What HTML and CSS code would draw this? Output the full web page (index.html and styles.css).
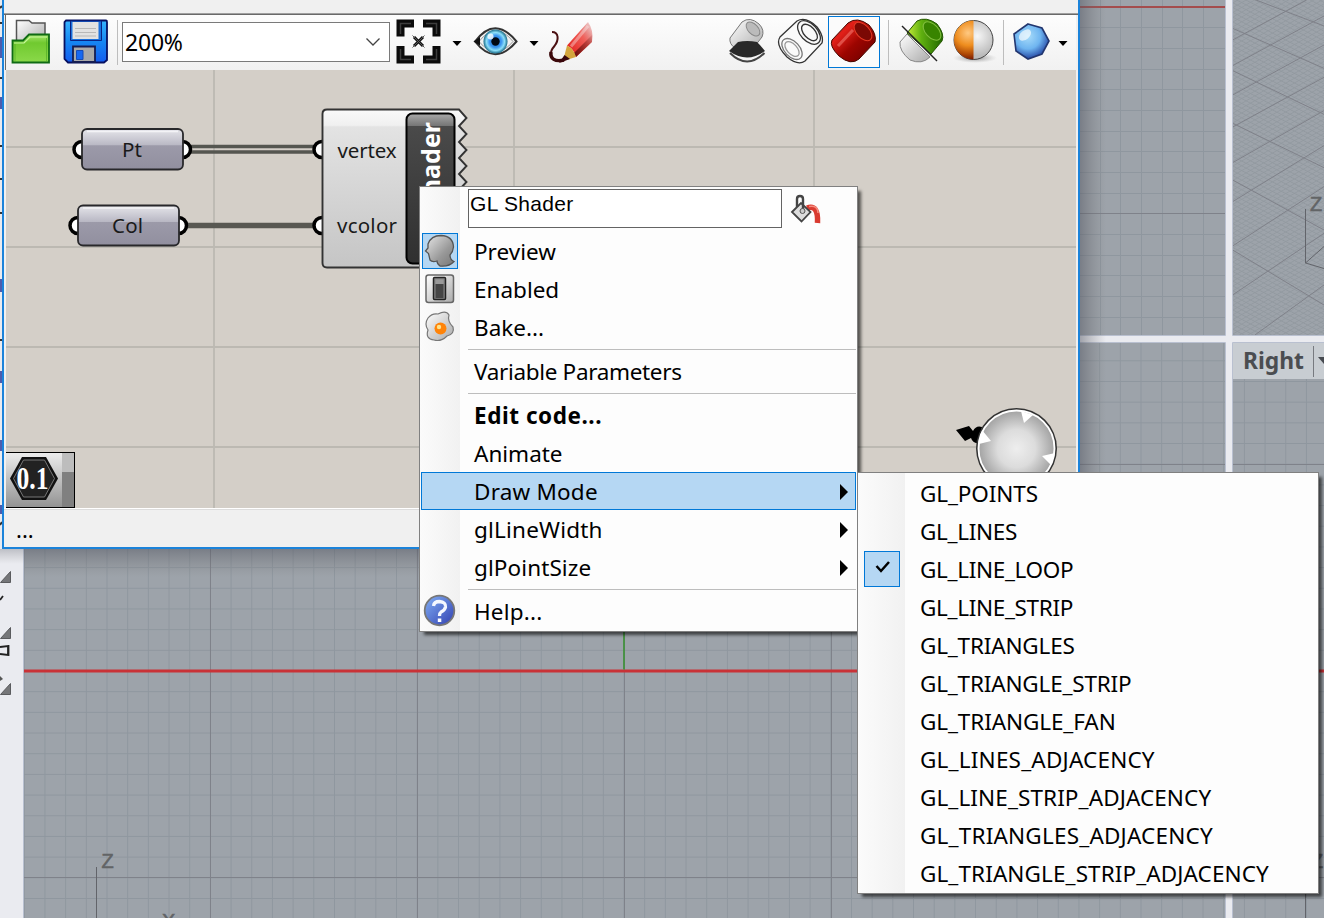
FILE: index.html
```
<!DOCTYPE html>
<html lang="en">
<head>
<meta charset="utf-8">
<title>Grasshopper</title>
<link rel="stylesheet" href="styles.css">
</head>
<body>
<main class="desktop">
<svg class="scene" width="1324" height="918" viewBox="0 0 1324 918">
  <defs>
    <pattern id="minor" x="624" y="671" width="20.68" height="20.68" patternUnits="userSpaceOnUse" patternTransform="translate(-0.5 -0.5)"><path d="M0 .5H20.68M.5 0V20.68" stroke="#8f979f" fill="none"/></pattern>
    <pattern id="iso" width="5" height="5" patternUnits="userSpaceOnUse" patternTransform="matrix(.88 .46 .88 -.5 0 2)"><path d="M0 .5H5M.5 0V5" stroke="#8b9399" stroke-width=".9" fill="none"/></pattern>
    <linearGradient id="edge"><stop stop-color="#555863" stop-opacity=".5"/><stop offset="1" stop-color="#777" stop-opacity="0"/></linearGradient>
    <linearGradient id="edgeV" x2="0" y2="1"><stop stop-color="#555863" stop-opacity=".5"/><stop offset="1" stop-color="#777" stop-opacity="0"/></linearGradient>
  </defs>
  <rect width="1324" height="918" fill="#eaebf0"/>
  <path d="M1080 -1H1225.500V335.500H1080M1232.500 -1V335.500H1330M24 342.500H1225.500V920M1232.500 920V342.500H1330M23.500 340V920" fill="none" stroke="#b9c0d0"/>
  <g fill="#9da3aa"><path d="M24 0H1225V335H24zM1233 0H1324V335H1233zM24 343H1225V918H24zM1233 343H1324V918H1233z"/></g>
  <g fill="url(#minor)"><path d="M24 343H1225V918H24z"/><path d="M1233 343H1324V918H1233z"/></g>
  <path d="M1100.500 0V335M1120.500 0V335M1141.500 0V335M1162.500 0V335M1182.500 0V335M1203.500 0V335M1080 27.500H1225M1080 48.500H1225M1080 69.500H1225M1080 89.500H1225M1080 110.500H1225M1080 131.500H1225M1080 151.500H1225M1080 172.500H1225M1080 193.500H1225M1080 234.500H1225M1080 255.500H1225M1080 275.500H1225M1080 296.500H1225M1080 317.500H1225" stroke="#8f979f"/>
  <path d="M210.500 343V918M417.500 343V918M624.500 343V918M831.500 343V918M24 877.500H1225M1080 464.500H1225M1233 464.500H1324M1233 877.500H1324M1080 213.500H1225" stroke="#7f828a"/>
  <path d="M1080 7H1225" stroke="#a44d4d" stroke-width="2"/>
  <path d="M24 671H1225M1233 671H1324" stroke="#c93237" stroke-width="2.800"/>
  <path d="M624 343V669.500" stroke="#43923f" stroke-width="1.800"/>
  <rect x="1233" width="91" height="335" fill="url(#iso)" opacity=".6"/>
  <svg x="1233" y="0" width="91" height="335" viewBox="0 0 91 335"><g transform="translate(-1233)"><g transform="translate(1060) scale(.3333)" stroke="#7f828a" stroke-width="3" fill="none">
    <path d="M575 -5L792 78M518 85L792 205M518 212L792 343M518 370L792 503M518 540L792 690M518 750L792 915M518 120L740 0M518 197L792 48M518 285L792 135M518 381L792 232M518 488L792 332M518 605L792 437M518 738L792 560M518 885L792 700M585 1005L792 855"/></g></g></svg>
  <g stroke="#62646a" fill="none"><path d="M1305.500 209V263L1324 246.500M1305.500 263L1324 268.500M96.500 867V918M1305.500 893V918"/></g>
  <g class="axis"><text x="1310" y="210.500">Z</text><text x="101.500" y="868">Z</text><text x="162" y="928">X</text><text x="1311" y="868">Z</text></g>
  <rect x="1233" y="343" width="91" height="36" fill="#c8cdd2"/>
  <path d="M1313.500 346V377" stroke="#777a80"/><path d="M1318 357H1330L1324 364z" fill="#46494f"/>
  <text class="vp" x="1243" y="369" textLength="61" lengthAdjust="spacingAndGlyphs">Right</text>
  <rect x="1080" width="26" height="549" fill="url(#edge)"/><rect x="24" y="549" width="1056" height="28" fill="url(#edgeV)"/><rect y="549" width="24" height="15" fill="url(#edgeV)" opacity=".6"/>
  <g fill="#757679" stroke="#5a5b5e"><path d="M.5 582.500H10.500V571.500zM.5 638.500H10.500V627.500zM.5 694.500H10.500V683.500z"/></g>
  <path d="M0 600L3 596M0 647L8 646V655L0 654M8.500 645V656" stroke="#222" stroke-width="1.800" fill="none"/><path d="M0 676L3 679L0 681z" fill="#555"/>
  <path d="M0 8L2 6M0 23H2M0 78H2M0 146H2M0 179H2M0 213H2M0 340H2M0 525L2 522" stroke="#333" stroke-width="2"/><path d="M0 37H2V58H0zM0 97H2V109H0zM0 279H2V292H0zM0 371H2V383H0zM0 440H2V451H0zM0 505H2V514H0z" fill="#4c5cad"/>
</svg>

<section class="window">
  <div class="strip"></div>
  <div class="toolbar">
    <svg class="i folder" width="44" height="48" viewBox="8 18 44 48"><defs><linearGradient id="gr" x2="0" y2="1"><stop stop-color="#a6e86c"/><stop offset=".3" stop-color="#70c92f"/><stop offset="1" stop-color="#8bd94a"/></linearGradient><linearGradient id="sv" x2="1" y2="1"><stop stop-color="#fff"/><stop offset="1" stop-color="#aaa"/></linearGradient></defs><path d="M16.500 45V20.500H29L32 23H45V45z" fill="url(#sv)" stroke="#555" stroke-width="1.500"/><path d="M12.500 62V40.500H23L29 34.500H49V62.500H12.500z" fill="url(#gr)" stroke="#0f6b14" stroke-width="1.800"/><path d="M14 43H24L30 37H47" fill="none" stroke="#c6f69a" stroke-width="1.200"/><path d="M15 44V61M46.500 38V61" stroke="#3f9e1e" opacity=".5"/></svg>
    <svg class="i disk" width="48" height="48" viewBox="62 18 48 48"><defs><linearGradient id="bl" x2="0" y2="1"><stop stop-color="#36b4ff"/><stop offset=".5" stop-color="#1687f2"/><stop offset="1" stop-color="#145cf0"/></linearGradient></defs><path d="M66 20.500H106Q107 20.500 107 22V60L104 62.500H68L64.500 59V22Z" fill="url(#bl)" stroke="#071060" stroke-width="1.800"/><path d="M70.500 21H101.500V40.500H70.500z" fill="#1a70dc" stroke="#0a2384"/><path d="M72.500 22H98.500V39H72.500z" fill="#e2e2e2"/><path d="M75 28.500H96M75 32.500H96M75 36H96" stroke="#b8b8b8"/><path d="M73 62V46.500H95V62z" fill="#a9a9a9" stroke="#151d52" stroke-width="1.800"/><path d="M76.500 50.500H83V59.500H76.500z" fill="#1768f2" stroke="#174bb5"/></svg>
    <i class="sep s1"></i>
    <div class="combo"><span>200%</span><svg width="14" height="8" viewBox="0 0 14 8"><path d="M.5 .5L7 7L13.500 .5" fill="none" stroke="#444" stroke-width="1.300"/></svg></div>
    <svg class="i focus" width="48" height="48" viewBox="394 18 48 48"><path d="M400.500 36.500V23.500H414M423 23.500H436.500V36.500M436.500 46V59.500H423M414 59.500H400.500V46" fill="none" stroke="#0b0b0b" stroke-width="8"/><path d="M400.500 34V23.500H411M426 23.500H436.500V34M436.500 49V59.500H426M411 59.500H400.500V49" fill="none" stroke="#3d3d3d" stroke-width="1.500"/><path d="M414 37L423 46M423 37L414 46" stroke="#111" stroke-width="3"/><path d="M412.500 35.500L424.500 47.500M424.500 35.500L412.500 47.500" stroke="#555"/></svg>
    <svg class="arr a1" width="10" height="48" viewBox="0 0 10 48"><path d="M.5 23H9.500L5 28z"/></svg>
    <svg class="i eye" width="48" height="48" viewBox="472 18 48 48"><defs><radialGradient id="ir"><stop stop-color="#176ecd"/><stop offset=".5" stop-color="#3d96f0"/><stop offset=".75" stop-color="#8ce0fa"/><stop offset="1" stop-color="#186a88"/></radialGradient></defs><path d="M475 41.500Q495 15 516.500 41.500Q495 67 475 41.500z" fill="#f1f1f1" stroke="#333" stroke-width="2"/><path d="M479 41.500Q496 20 513 41.500Q496 62 479 41.500" fill="none" stroke="#999"/><path d="M473.500 41.500L480 37V45.500z" fill="#111"/><circle cx="495.500" cy="41.500" r="12" fill="url(#ir)"/><circle cx="495.500" cy="41.500" r="4.200" fill="#010814"/><circle cx="490.500" cy="36.500" r="3" fill="#fff" opacity=".8"/></svg>
    <svg class="arr a2" width="10" height="48" viewBox="0 0 10 48"><path d="M.5 23H9.500L5 28z"/></svg>
    <svg class="i pencil" width="48" height="48" viewBox="546 18 48 48"><defs><linearGradient id="rp" x1="1" x2="0" y2="1"><stop stop-color="#c44" stop-opacity=".1"/><stop offset=".4" stop-color="#f0605a"/><stop offset="1" stop-color="#e01411"/></linearGradient><linearGradient id="rs" x1="1" x2="0" y2="1"><stop stop-color="#65100d" stop-opacity=".1"/><stop offset="1" stop-color="#65100d"/></linearGradient></defs><path d="M552 32C559 32 559 40 554.500 46C549 52 549 60 559 61" fill="none" stroke="#4b1012" stroke-width="2"/><path d="M551 52C550 59 555 62 564 60" fill="none" stroke="#3b080a" stroke-width="3.500"/><path d="M588 22Q594 30 592 42L576 57Q574 49 567 45.500z" fill="url(#rp)"/><path d="M588 26L571 46.500" stroke="#fff" stroke-width="3" opacity=".35"/><path d="M592 35V42L576 57L574 53z" fill="url(#rs)"/><path d="M567 45.500Q574 49 576 57L563 61z" fill="#d4a53c"/><path d="M564.500 55L570 59L559 63z" fill="#38050b"/></svg>
    <svg class="i shade" width="48" height="48" viewBox="723 18 48 48"><path d="M730 38L742 22Q750 16 759 24Q765 30 762 37L751 51L735 48Q729 44 730 38z" fill="url(#sv)" stroke="#777"/><ellipse cx="753" cy="29" rx="5" ry="8.500" transform="rotate(-43 753 29)" fill="#bbb" stroke="#888"/><path d="M730 53Q747 70 764.500 53" fill="none" stroke="#444" stroke-width="2"/><path d="M729 51Q734 46 738 42Q747 40 757 42Q761 46 765 51Q747 64 729 51z" fill="#292929"/></svg>
    <svg class="i wire" width="48" height="48" viewBox="776 18 48 48"><g fill="none" stroke="#333" stroke-width="1.300"><path d="M780 37L797 21Q806 16 817 27Q824 36 822 43L805 61Q798 66 787 57Q775 45 780 37z" fill="#fafafa"/><ellipse cx="809" cy="32.500" rx="8.500" ry="14" transform="rotate(-43 809 32.500)"/><ellipse cx="809.500" cy="32.500" rx="5.500" ry="10" transform="rotate(-43 809.500 32.500)"/><ellipse cx="792" cy="49" rx="7.500" ry="12.500" transform="rotate(-43 792 49)" stroke="#777"/><ellipse cx="792" cy="49" rx="5" ry="9" transform="rotate(-43 792 49)" stroke="#999"/></g></svg>
    <div class="picked"><svg width="50" height="50" viewBox="829 17 50 50"><defs><linearGradient id="red" x2="1" y2="1"><stop stop-color="#9e0600"/><stop offset=".28" stop-color="#e22019"/><stop offset=".55" stop-color="#9d0500"/><stop offset="1" stop-color="#630000"/></linearGradient></defs><path d="M832 40L848 23Q857 16 869 25Q877 34 875 42L859 59Q851 66 839 56Q829 46 832 40z" fill="url(#red)" stroke="#460700"/><path d="M838 46L853 30" stroke="#ff958b" stroke-width="3" opacity=".45"/><ellipse cx="863" cy="31.500" rx="6.500" ry="11" transform="rotate(-43 863 31.500)" fill="#7b0904" stroke="#e43a25"/></svg></div>
    <i class="sep s2"></i>
    <svg class="i cut" width="48" height="48" viewBox="898 18 48 48"><defs><linearGradient id="dg"><stop stop-color="#c8ed3a"/><stop offset=".4" stop-color="#60b010"/><stop offset="1" stop-color="#206700"/></linearGradient></defs><path d="M900 42L907 34L930 57Q922 65 910 60Q899 51 900 42z" fill="url(#sv)" stroke="#888"/><path d="M907 33L917 21Q926 16 937 24Q945 34 942 41L931 54z" fill="url(#dg)" stroke="#245700"/><ellipse cx="932" cy="31" rx="6.500" ry="11" transform="rotate(-43 932 31)" fill="#388400" stroke="#82bf3e"/><path d="M902 26L937 61" stroke="#222" stroke-width="1.500"/></svg>
    <svg class="i ball" width="48" height="48" viewBox="950 18 48 48"><defs><radialGradient id="ob" gradientUnits="userSpaceOnUse" cx="968" cy="33" r="28"><stop stop-color="#ffc982"/><stop offset=".45" stop-color="#ee8d1e"/><stop offset=".75" stop-color="#b04b06"/><stop offset="1" stop-color="#6e0f00"/></radialGradient><radialGradient id="gb" cx=".6" cy=".4"><stop stop-color="#f6f6f6"/><stop offset="1" stop-color="#bbb"/></radialGradient><radialGradient id="sh"><stop stop-color="#888"/><stop offset="1" stop-color="#bbb" stop-opacity="0"/></radialGradient></defs><ellipse cx="975" cy="58" rx="22" ry="5" fill="url(#sh)"/><circle cx="973.500" cy="40" r="19.500" fill="url(#gb)" stroke="#444"/><path d="M973.500 20.500A19.500 19.500 0 0 0 973.500 59.500z" fill="url(#ob)"/></svg>
    <i class="sep s3"></i>
    <svg class="i hept" width="48" height="48" viewBox="1008 18 48 48"><defs><radialGradient id="hb" cx=".4" cy=".35" r=".6"><stop stop-color="#a8dcfa"/><stop offset=".6" stop-color="#6fb5f0"/><stop offset="1" stop-color="#2f58b0"/></radialGradient></defs><path d="M1028 24L1042 28L1049 41L1042 54L1028 59L1016 51L1014 34z" fill="url(#hb)" stroke="#22366f" stroke-width="1.600"/><ellipse cx="1025" cy="35" rx="7" ry="4.500" fill="#fff" opacity=".65" transform="rotate(-40 1025 35)"/></svg>
    <svg class="arr a3" width="10" height="48" viewBox="0 0 10 48"><path d="M.5 23H9.500L5 28z"/></svg>
  </div>
  <svg class="canvas" width="1070" height="438" viewBox="6 70 1070 438">
    <defs>
      <linearGradient id="pill" x2="0" y2="1"><stop stop-color="#e6e6eb"/><stop offset=".4" stop-color="#b9b8c4"/><stop offset=".41" stop-color="#9c9aa9"/><stop offset="1" stop-color="#918f9f"/></linearGradient>
      <linearGradient id="comp" x2="0" y2="1"><stop stop-color="#fafafa"/><stop offset=".1" stop-color="#f0f0f0"/><stop offset=".11" stop-color="#e3e3e3"/><stop offset="1" stop-color="#c5c5c5"/></linearGradient>
      <linearGradient id="cap" x2="0" y2="1"><stop stop-color="#aaa"/><stop offset=".08" stop-color="#777"/><stop offset=".085" stop-color="#4a4a4a"/><stop offset="1" stop-color="#303030"/></linearGradient>
      <radialGradient id="knob"><stop stop-color="#eee"/><stop offset=".5" stop-color="#dcdcdc"/><stop offset="1" stop-color="#a2a2a2"/></radialGradient>
      <linearGradient id="badge" x2="0" y2="1"><stop stop-color="#ededed"/><stop offset="1" stop-color="#929292"/></linearGradient>
    </defs>
    <rect x="6" y="70" width="1070" height="438" fill="#d4cfc8"/>
    <path d="M214 70V508M514 70V508M814 70V508M6 147H1076M6 247H1076M6 347H1076M6 447H1076" stroke="#bcb9b2" stroke-width="1.800"/>
    <path d="M191 146.500H315M191 152H315" stroke="#555650" stroke-width="3.600"/><path d="M187 225.500H315" stroke="#585852" stroke-width="5.500"/>
    <g fill="#fff" stroke="#000" stroke-width="3.500"><circle cx="82" cy="149.500" r="8"/><circle cx="182.500" cy="149.500" r="8"/><circle cx="78" cy="225.500" r="8"/><circle cx="178.500" cy="225.500" r="8"/><circle cx="322" cy="149.500" r="8"/><circle cx="322" cy="225.500" r="8"/></g>
    <g fill="url(#pill)" stroke="#28282b" stroke-width="1.800"><rect x="82" y="129" width="101" height="40.500" rx="5"/><rect x="78" y="205.500" width="101" height="40" rx="5"/></g>
    <path d="M87 131.500H178M83 208H174" stroke="#f3f3f6" stroke-width="1.500"/>
    <path d="M327 109.500H459L466.500 118L459 126L466.500 134L459 142L466.500 150L459 158L466.500 166L459 174L466.500 182L459 190V267.500H327Q322.500 267.500 322.500 263V114Q322.500 109.500 327 109.500z" fill="url(#comp)" stroke="#333" stroke-width="1.900"/>
    <rect x="406.500" y="113.500" width="48" height="150" rx="6" fill="url(#cap)" stroke="#000" stroke-width="2"/>
    <g class="node"><text x="122" y="156.500" textLength="20">Pt</text><text x="112" y="232.500" textLength="31">Col</text><text x="337.500" y="157.500" textLength="59">vertex</text><text x="337" y="232.500" textLength="60">vcolor</text></g>
    <text class="caption" transform="translate(440 122) rotate(-90)" text-anchor="end">GL Shader</text>
    <path d="M956 430L969 426L973 431Q976 425 982 427L979 443Q973 444 971 438L965 441z" fill="#000"/>
    <circle cx="1016.500" cy="448.500" r="40.500" fill="#333"/><circle cx="1016.500" cy="448.500" r="38" fill="url(#knob)" stroke="#fff" stroke-width="1.900"/>
    <path d="M1021 411L1024 423L1033 415zM982 430L991 441L979 444zM1042 456L1055 453L1051 465z" fill="#fff"/>
    <rect x="5.500" y="452.500" width="69" height="55" fill="url(#badge)" stroke="#000"/><rect x="62" y="453" width="12" height="19" fill="#bdbdbd"/><rect x="62" y="472" width="12" height="35" fill="#808080"/>
    <path d="M22 457H46L58 478.500L46 500H22L10 478.500z" fill="#111"/><path d="M23.500 460H44.500L54.500 478.500L44.500 497H23.500L13.500 478.500z" fill="#222" stroke="#777"/>
    <text class="badge" x="16.500" y="489" textLength="32" lengthAdjust="spacingAndGlyphs">0.1</text>
  </svg>
  <div class="status">...</div>
</section>

<nav class="menu main">
  <div class="name"><span class="field">GL Shader</span><svg width="34" height="34" viewBox="789 192 34 34"><path d="M807 208Q818.500 204 817.500 223" fill="none" stroke="#d93a30" stroke-width="5.500"/><path d="M809 206.500Q818 205 818 213" fill="none" stroke="#f58a7c" stroke-width="1.500"/><path d="M792 212L801 203L810.500 212L801.500 221.500z" fill="#ddd" stroke="#444" stroke-width="1.800"/><path d="M797 207V199Q797 196 800 196T803 199V209" fill="none" stroke="#444" stroke-width="2.400"/><circle cx="802.500" cy="211" r="2.500" fill="#ccc" stroke="#555"/></svg></div>
  <div class="row"><span class="ico on"><svg width="36" height="36" viewBox="422 233 36 36"><defs><linearGradient id="hd" x2="1" y2="1"><stop stop-color="#e8e8e8"/><stop offset=".6" stop-color="#999"/><stop offset="1" stop-color="#777"/></linearGradient></defs><path d="M428 244Q431 235.500 441 235.500Q453 236 453.500 247Q453 252 450 255Q450 260 454 261.500Q449 267 440 266Q437 264 437 261Q432 262.500 430 260L428.500 253.500L425.500 251L428 248z" fill="url(#hd)" stroke="#555" stroke-width="1.300"/></svg></span><span class="t">Preview</span></div>
  <div class="row"><span class="ico"><svg width="36" height="36" viewBox="422 271 36 36"><rect x="426" y="275" width="27.500" height="27.500" rx="2.500" fill="url(#sv)" stroke="#666" stroke-width="1.500"/><rect x="433.500" y="277.500" width="12" height="22" rx="1" fill="#858585" stroke="#222" stroke-width="1.500"/><path d="M435.500 284H443.500V298H435.500z" fill="#454545"/><path d="M435.500 279.500H443.500V284H435.500z" fill="#999"/></svg></span><span class="t">Enabled</span></div>
  <div class="row"><span class="ico"><svg width="36" height="36" viewBox="422 309 36 36"><path d="M428 318Q432 313 438 314Q446 310 449 315Q447 321 453 327Q455 334 447 336Q441 342 434 340Q425 339 428 330Q424 324 428 318z" fill="url(#sv)" stroke="#777" stroke-width="1.200"/><circle cx="440.500" cy="328.500" r="6" fill="#ff8308"/><circle cx="439" cy="327" r="2.200" fill="#ffe38a"/></svg></span><span class="t">Bake...</span></div>
  <hr>
  <div class="row"><span class="t n3">Variable Parameters</span></div>
  <hr>
  <div class="row"><b class="t p5">Edit code...</b></div>
  <div class="row"><span class="t">Animate</span></div>
  <div class="row sel"><span class="t p2">Draw Mode</span><i class="more"></i></div>
  <div class="row"><span class="t p2">glLineWidth</span><i class="more"></i></div>
  <div class="row"><span class="t p1">glPointSize</span><i class="more"></i></div>
  <hr>
  <div class="row"><span class="ico"><svg width="36" height="36" viewBox="422 593 36 36"><defs><linearGradient id="hp" x2="1" y2="1"><stop stop-color="#83b0f5"/><stop offset="1" stop-color="#303fb0"/></linearGradient></defs><circle cx="439.500" cy="610.500" r="14.800" fill="url(#hp)" stroke="#777" stroke-width="1.800"/><path d="M433.500 606Q434 601.500 439.500 601.500Q446 602 445.500 607Q445 610 441 612Q439.500 613 439.500 616" fill="none" stroke="#f5f8ff" stroke-width="3.300"/><rect x="437.800" y="618.500" width="3.500" height="3.500" fill="#fff"/></svg></span><span class="t p2">Help...</span></div>
</nav>

<nav class="menu sub">
  <div class="row"><span class="t n1">GL_POINTS</span></div>
  <div class="row"><span class="t n3">GL_LINES</span></div>
  <div class="row"><span class="ico on"><svg width="36" height="36" viewBox="0 0 36 36"><path d="M12.500 15L17 20L25 11" fill="none" stroke="#000" stroke-width="2.500"/></svg></span><span class="t n3">GL_LINE_LOOP</span></div>
  <div class="row"><span class="t n3">GL_LINE_STRIP</span></div>
  <div class="row"><span class="t n2">GL_TRIANGLES</span></div>
  <div class="row"><span class="t n2">GL_TRIANGLE_STRIP</span></div>
  <div class="row"><span class="t n1">GL_TRIANGLE_FAN</span></div>
  <div class="row"><span class="t p2">GL_LINES_ADJACENCY</span></div>
  <div class="row"><span class="t p1">GL_LINE_STRIP_ADJACENCY</span></div>
  <div class="row"><span class="t p2">GL_TRIANGLES_ADJACENCY</span></div>
  <div class="row"><span class="t p1">GL_TRIANGLE_STRIP_ADJACENCY</span></div>
</nav>
</main>
</body>
</html>
```
FILE: styles.css
```
* { box-sizing: border-box; }
body { margin: 0; overflow: hidden; font-family: "Noto Sans", "Open Sans", sans-serif; color: #000; }
svg { display: block; flex: none; }
.desktop { position: relative; width: 1324px; height: 918px; overflow: hidden; }
.axis text { font: 20px "Liberation Sans", sans-serif; fill: #626466; stroke: #626466; stroke-width: .6px; }
.vp { font: bold 24px "Noto Sans", sans-serif; fill: #4b4d51; }

/* editor window floating over the viewports */
.window { position: absolute; left: 2px; top: 0; width: 1078px; height: 549px; border: solid #1b83da; border-width: 0 2px 2px; background: #f0f0f0; display: flex; flex-direction: column; }
.strip { height: 15px; border-bottom: 1px solid #696969; box-shadow: inset 0 -1px #a0a0a0; }
.toolbar { height: 55px; margin: 0 2px 0 1px; border-left: 1px solid #696969; padding-top: 3px; display: flex; background: linear-gradient(#fdfdfd, #f1f1f1); }
.arr { fill: #000; }
.folder { margin-left: 2px; }
.disk { margin-left: 10px; }
.sep { width: 1px; height: 45px; margin-top: 2px; background: #bdbdbd; flex: none; }
.s1 { margin-left: 7px; }
.combo { margin: 4px 4px 0; width: 268px; height: 40px; border: 1px solid #7a7a7a; background: #fff; display: flex; justify-content: space-between; align-items: center; padding: 0 9px 0 2px; font-size: 23px; letter-spacing: -.2px; flex: none; }
.a1 { margin-left: 10px; }
.eye { margin-left: 10px; }
.a2 { margin-left: 9px; }
.pencil { margin-left: 7px; }
.shade { margin-left: 129px; }
.wire { margin-left: 5px; }
.picked { width: 52px; height: 52px; margin: -2px 0 0 4px; border: 1px solid #0078d7; background: #fbfbfb; flex: none; }
.s2 { margin-left: 8px; }
.cut { margin-left: 9px; }
.ball { margin-left: 4px; }
.s3 { margin-left: 5px; }
.hept { margin-left: 4px; }
.a3 { margin-left: 2px; }
.canvas { margin-left: 2px; }
.node text { font-size: 20.500px; fill: #1a1a1a; }
.caption { font: bold 25px "Noto Sans", sans-serif; fill: #fff; }
.badge { font: bold 31px "Liberation Serif", serif; fill: #fff; }
.status { flex: 1; border-top: 1px solid #fff; box-shadow: inset 0 1px #ddd; padding: 5px 0 0 12px; font-size: 22px; line-height: 30px; }

/* drop-down menus */
.menu { position: absolute; border: 1px solid #808080; box-shadow: 4px 4px 3px -1px rgba(0, 0, 0, .6); }
.main { left: 419px; top: 186px; width: 439px; height: 446px; background: linear-gradient(90deg, #fbfbfb, #f1f1f1 40px, #fdfdfd 40px); }
.sub { left: 857px; top: 472px; width: 462px; height: 422px; padding-top: 2px; background: linear-gradient(90deg, #fbfbfb, #f1f1f1 47px, #fdfdfd 47px); }
.name { height: 46px; padding: 2px 0 0 48px; display: flex; gap: 7px; }
.name svg { margin-top: 3px; }
.field { width: 314px; height: 39px; border: 1px solid #646464; background: #fff; padding: 1px; font: 21px/25px "Liberation Sans", sans-serif; letter-spacing: .3px; }
.row { height: 38px; display: grid; grid-template-columns: 52px 1fr auto; align-items: center; margin: 0 1px; }
.sub .row { grid-template-columns: 60px 1fr; }
.row .t { grid-column: 2; grid-row: 1; font-size: 22.500px; line-height: 36px; white-space: nowrap; padding-left: 1px; }
.row .ico { grid-column: 1; grid-row: 1; width: 36px; height: 36px; margin: -2px 0 0 1px; }
.sub .ico { margin-left: 5px; }
.on { background: #b5d7f3; box-shadow: inset 0 0 0 1px #0078d7; }
.sel { background: #b5d7f3; box-shadow: inset 0 0 0 1px #0078d7; margin-top: -1px; margin-bottom: 1px; padding-top: 1px; }
.more { grid-column: 3; grid-row: 1; margin-right: 8px; border: solid transparent; border-width: 8px 0 8px 8px; border-left-color: #000; }
.menu hr { height: 6px; margin: 0 1px 0 48px; border: 0; background: linear-gradient(transparent 2px, #bdbdbd 2px, #bdbdbd 3px, transparent 3px); }

/* tracking steps for menu labels */
.n1 { letter-spacing: -.1px; }
.n2 { letter-spacing: -.18px; }
.n3 { letter-spacing: -.33px; }
.p1 { letter-spacing: .1px; }
.p2 { letter-spacing: .2px; }
.p5 { letter-spacing: .55px; }
```
